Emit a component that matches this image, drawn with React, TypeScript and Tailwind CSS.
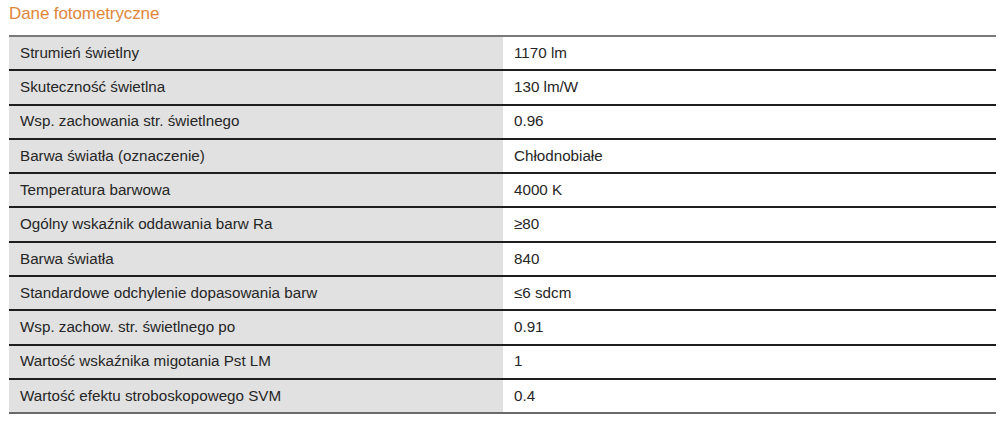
const rows: [string, string][] = [
  ["Strumień świetlny", "1170 lm"],
  ["Skuteczność świetlna", "130 lm/W"],
  ["Wsp. zachowania str. świetlnego", "0.96"],
  ["Barwa światła (oznaczenie)", "Chłodnobiałe"],
  ["Temperatura barwowa", "4000 K"],
  ["Ogólny wskaźnik oddawania barw Ra", "≥80"],
  ["Barwa światła", "840"],
  ["Standardowe odchylenie dopasowania barw", "≤6 sdcm"],
  ["Wsp. zachow. str. świetlnego po", "0.91"],
  ["Wartość wskaźnika migotania Pst LM", "1"],
  ["Wartość efektu stroboskopowego SVM", "0.4"],
];

export default function App() {
  return (
    <div className="h-[431px] w-[1000px] bg-white font-['Liberation_Sans',Arial,sans-serif] text-[#262626]">
      {/* Heading */}
      <div className="px-[9px] pt-[3px] text-[17px] leading-[22px] tracking-[-0.1px] text-[#e0863a]">
        Dane fotometryczne
      </div>

      {/* Table */}
      <div className="ml-[9px] mt-[10px] w-[987px] border-t-2 border-[#7a7a7a]">
        {rows.map(([label, value], i) => (
          <div
            key={label}
            className={`flex h-[34.3px] border-b-2 text-[15.2px] ${
              i === rows.length - 1 ? "border-[#6a6a6a]" : "border-[#1e1e1e]"
            }`}
          >
            <div className="flex w-[494px] items-center bg-[#e1e1e1] pl-[11px]">{label}</div>
            <div className="flex flex-1 items-center pl-[11px]">{value}</div>
          </div>
        ))}
      </div>
    </div>
  );
}
